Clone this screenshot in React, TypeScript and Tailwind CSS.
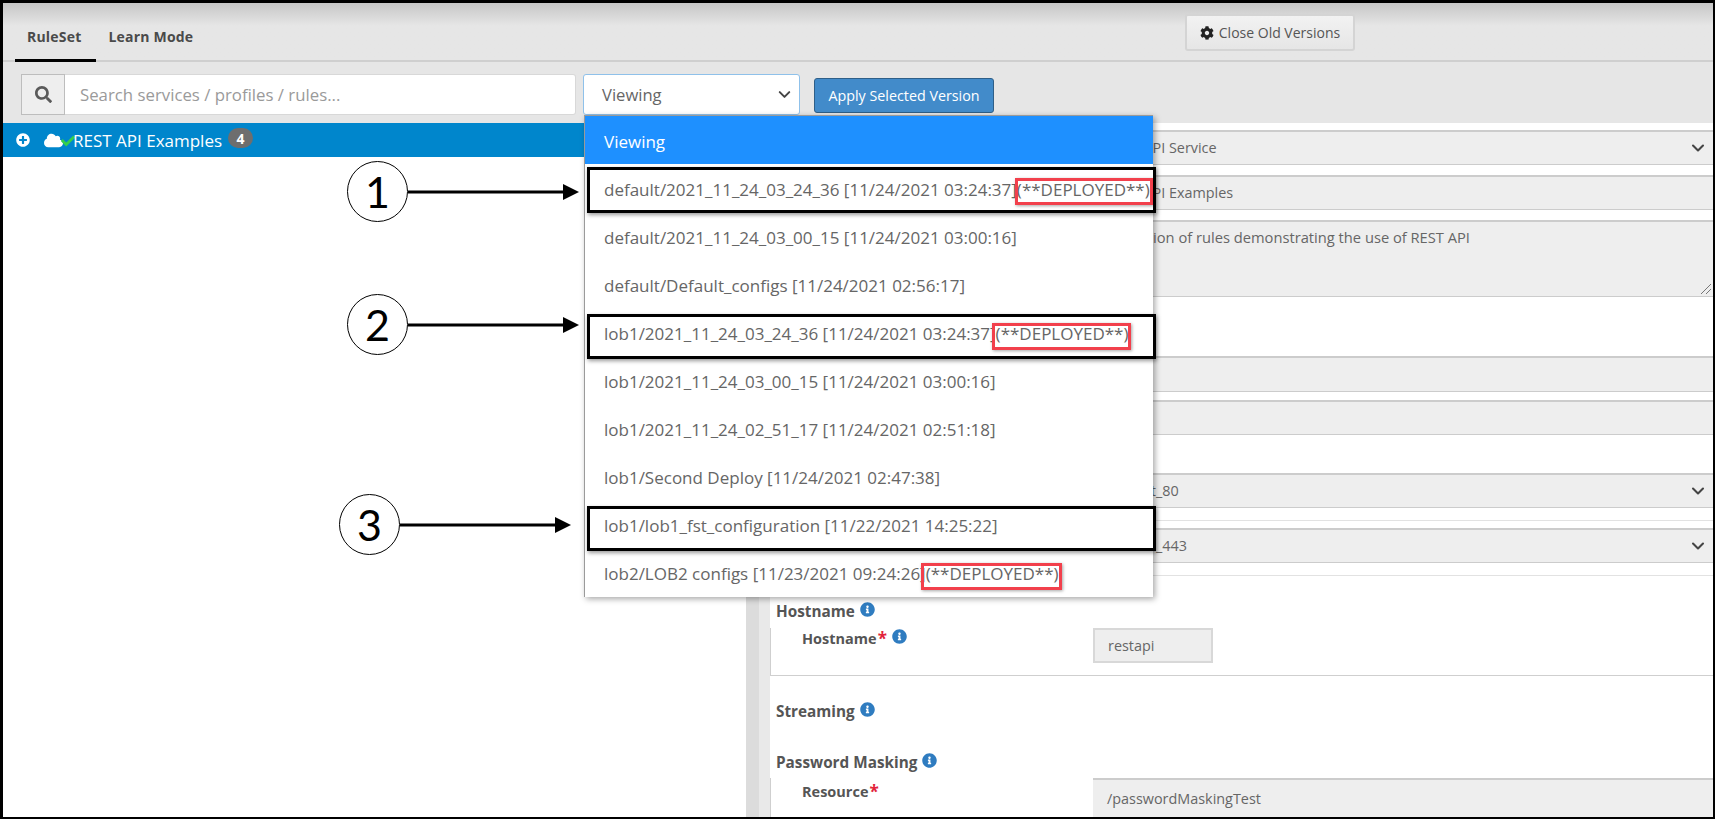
import React from "react";
import { FaSearch, FaCog, FaInfoCircle, FaCloud, FaCheck, FaPlusCircle } from "react-icons/fa";
import { ChevronDown } from "lucide-react";

const versions = [
  "default/2021_11_24_03_24_36 [11/24/2021 03:24:37](**DEPLOYED**)",
  "default/2021_11_24_03_00_15 [11/24/2021 03:00:16]",
  "default/Default_configs [11/24/2021 02:56:17]",
  "lob1/2021_11_24_03_24_36 [11/24/2021 03:24:37](**DEPLOYED**)",
  "lob1/2021_11_24_03_00_15 [11/24/2021 03:00:16]",
  "lob1/2021_11_24_02_51_17 [11/24/2021 02:51:18]",
  "lob1/Second Deploy [11/24/2021 02:47:38]",
  "lob1/lob1_fst_configuration [11/22/2021 14:25:22]",
  "lob2/LOB2 configs [11/23/2021 09:24:26](**DEPLOYED**)",
];

function Field({ text, chevron, className }: { text?: string; chevron?: boolean; className: string }) {
  return (
    <div className={`ml-[323px] h-[35px] shrink-0 flex items-center justify-between pl-[14px] pr-[5px] bg-[#eeeeee] border-t-2 border-b border-[#cccccc] text-[14.4px] text-[#666666] ${className}`}>
      <span>{text}</span>
      {chevron && <ChevronDown size={20} strokeWidth={2.5} className="text-[#444444]" />}
    </div>
  );
}

function Info({ className = "" }: { className?: string }) {
  return <FaInfoCircle size={15} className={`text-[#2f7cc0] ${className}`} />;
}

function Heading({ text, className }: { text: string; className: string }) {
  return (
    <div className={`h-5 shrink-0 pl-[6px] flex items-center gap-[5px] text-[15.3px] font-bold text-[#555555] ${className}`}>
      <span>{text}</span>
      <Info className="-mt-1" />
    </div>
  );
}

function Annotation({ n, left, top }: { n: string; left: string; top: string }) {
  return (
    <div className={`absolute flex items-center ${left} ${top}`}>
      <div className="w-[61px] h-[61px] rounded-full border border-black bg-white flex items-center justify-center text-[43px] leading-none text-black font-['Lato',sans-serif]">
        {n}
      </div>
      <svg width="171" height="18" viewBox="0 0 171 18" className="block">
        <line x1="0" y1="9" x2="156" y2="9" stroke="black" strokeWidth="3" />
        <polygon points="155,1 171,9 155,17" fill="black" />
      </svg>
    </div>
  );
}

export default function App() {
  return (
    <div className="relative w-[1715px] h-[819px] overflow-hidden bg-white font-['Open_Sans',sans-serif]">
      <div className="h-full flex flex-col border-t-[3px] border-l-[3px] border-r-2 border-b-2 border-black overflow-hidden">
        {/* Tabs */}
        <div className="h-[59px] shrink-0 flex items-stretch justify-between border-b-2 border-[#cfcfcf] bg-linear-to-b from-[#c6c6c6] to-[#e6e6e6] to-[40%]">
          <div className="flex items-stretch pl-3 -mb-0.5 text-[14px] font-bold text-[#4a4a4a]">
            <div className="pl-3 pr-[15px] pt-[23px] border-b-[3px] border-black tracking-[0.2px]">RuleSet</div>
            <div className="pl-3 pt-[23px] tracking-[0.2px]">Learn Mode</div>
          </div>
          <div className="mr-[358px] mt-[11px] h-[37px] w-[170px] flex items-center justify-center gap-[5px] rounded-[3px] border-2 border-[#d4d4d4] bg-linear-to-b from-[#f2f2f2] to-[#e6e6e6] text-[14px] text-[#555555]">
            <FaCog size={14} className="text-[#222222]" />
            <span>Close Old Versions</span>
          </div>
        </div>

        {/* Toolbar */}
        <div className="h-[61px] shrink-0 bg-[#e6e6e6] flex items-start pt-3 pl-[18px]">
          <div className="w-[44px] h-[41px] shrink-0 flex items-center justify-center bg-[#eeeeee] border border-[#bdbdbd]">
            <FaSearch size={17} className="text-[#5a5a5a]" />
          </div>
          <div className="w-[511px] h-[41px] shrink-0 flex items-center pl-[15px] bg-white rounded-r-[3px] border border-l-0 border-[#d8d8d8] text-[16.8px] text-[#9a9a9a]">
            Search services / profiles / rules...
          </div>
          <div className="relative ml-[7px] w-[217px] h-[41px] shrink-0">
            <div className="h-full flex items-center justify-between pl-[18px] pr-[5px] bg-white rounded-[3px] border border-[#8fc1ea] text-[16.6px] text-[#666666]">
              <span className="pt-px">Viewing</span>
              <ChevronDown size={19} strokeWidth={2.5} className="text-[#444444]" />
            </div>
            <div className="absolute z-10 left-[1px] top-[41px] w-[569px] h-[482px] bg-white border-l border-t border-[#9a9a9a] shadow-[2px_2px_6px_rgba(0,0,0,0.35)] flex flex-col">
              <div className="h-12 shrink-0 flex items-center pl-[19px] pt-[3px] bg-[#1e90ff] text-[17px] text-white">Viewing</div>
              {versions.map((v) => (
                <div key={v} className="h-12 shrink-0 flex items-center pl-[19px] pt-[3px] text-[17px] text-[#666666] whitespace-nowrap">
                  {v}
                </div>
              ))}
            </div>
          </div>
          <div className="ml-[14px] mt-1 w-[180px] h-[35px] shrink-0 flex items-center justify-center rounded-[3px] bg-[#428bca] border border-[#2f5f88] text-[14.3px] text-white">
            Apply Selected Version
          </div>
        </div>

        {/* Body */}
        <div className="flex-1 flex min-h-0">
          <div className="w-[743px] shrink-0">
            <div className="h-[34px] flex items-center bg-[#0086cc] text-white">
              <FaPlusCircle size={14} className="ml-[13px]" />
              <FaCloud size={19} className="ml-[14px]" />
              <FaCheck size={14} className="text-[#35d04a] -ml-[2px] mt-0.5" />
              <span className="-ml-[2px] pt-px text-[17px] whitespace-nowrap">REST API Examples</span>
              <span className="ml-[6px] -mt-[4px] w-[25px] h-5 rounded-full bg-[#6e6e6e] flex items-center justify-center text-[14px] font-bold">4</span>
            </div>
          </div>
          <div className="w-[13px] shrink-0 bg-[#dcdcdc]" />
          <div className="w-[11px] shrink-0 bg-[#e9e9e9]" />
          <div className="flex-1 min-w-0 flex flex-col overflow-hidden">
            <Field text="REST API Service" chevron className="mt-[7px]" />
            <Field text="REST API Examples" className="mt-[10px]" />
            <div className="relative ml-[323px] mt-[10px] h-[77px] shrink-0 pl-[14px] pt-[4px] bg-[#eeeeee] border-t-2 border-b border-[#cccccc] text-[14.7px] text-[#666666]">
              Collection of rules demonstrating the use of REST API
              <svg width="12" height="12" viewBox="0 0 12 12" className="absolute right-[1px] bottom-[1px]">
                <line x1="1" y1="11" x2="11" y2="1" stroke="#777777" />
                <line x1="6" y1="11" x2="11" y2="6" stroke="#777777" />
              </svg>
            </div>
            <Field className="mt-[59px] !h-[36px]" />
            <Field className="mt-[8px]" />
            <Field text="Default_80" chevron className="mt-[38px]" />
            <div className="ml-[323px] mt-[12px] h-px shrink-0 bg-[#e2e2e2]" />
            <Field text="Default_443" chevron className="mt-[7px]" />
            <div className="ml-[323px] mt-[12px] h-px shrink-0 bg-[#e2e2e2]" />

            <Heading text="Hostname" className="mt-[25px]" />
            <div className="mt-[7px] h-[48px] shrink-0 flex items-start border-l border-b border-[#cfcfcf]">
              <div className="w-[322px] shrink-0 pl-[31px] -mt-[2px] flex items-center text-[14.5px] font-bold text-[#555555]">
                <span>Hostname</span>
                <span className="text-[#e2233a] text-[17px] ml-px">*</span>
                <Info className="ml-[5px] -mt-1" />
              </div>
              <div className="w-[120px] h-[35px] flex items-center pl-[13px] bg-[#eeeeee] border-2 border-[#d8d8d8] text-[14.4px] text-[#666666]">restapi</div>
            </div>

            <Heading text="Streaming" className="mt-[25px]" />
            <Heading text="Password Masking" className="mt-[31px]" />
            <div className="mt-[6px] flex-1 flex items-start border-l border-[#cfcfcf]">
              <div className="w-[322px] shrink-0 pl-[31px] pt-px flex items-center text-[14.5px] font-bold text-[#555555]">
                <span>Resource</span>
                <span className="text-[#e2233a] text-[17px] ml-px">*</span>
              </div>
              <div className="flex-1 h-full flex items-center pl-[14px] bg-[#eeeeee] border-t-2 border-[#cccccc] text-[14.4px] text-[#666666]">/passwordMaskingTest</div>
            </div>
          </div>
        </div>
      </div>

      {/* Annotations drawn over the screenshot */}
      <div className="absolute inset-0 z-20 pointer-events-none">
        <Annotation n="1" left="left-[347px]" top="top-[161px]" />
        <Annotation n="2" left="left-[347px]" top="top-[294px]" />
        <Annotation n="3" left="left-[339px]" top="top-[494px]" />

        <div className="absolute left-[587px] top-[167px] w-[569px] h-[46px] border-[3px] border-black shadow-[1px_2px_4px_rgba(0,0,0,0.4)]" />
        <div className="absolute left-[587px] top-[314px] w-[569px] h-[45px] border-[3px] border-black shadow-[1px_2px_4px_rgba(0,0,0,0.4)]" />
        <div className="absolute left-[587px] top-[506px] w-[569px] h-[45px] border-[3px] border-black shadow-[1px_2px_4px_rgba(0,0,0,0.4)]" />

        <div className="absolute left-[1015px] top-[178px] w-[138px] h-[27px] border-[3px] border-[#f2404c] shadow-[1px_1px_3px_rgba(0,0,0,0.35)]" />
        <div className="absolute left-[992px] top-[323px] w-[139px] h-[27px] border-[3px] border-[#f2404c] shadow-[1px_1px_3px_rgba(0,0,0,0.35)]" />
        <div className="absolute left-[921px] top-[563px] w-[141px] h-[27px] border-[3px] border-[#f2404c] shadow-[1px_1px_3px_rgba(0,0,0,0.35)]" />
      </div>
    </div>
  );
}
